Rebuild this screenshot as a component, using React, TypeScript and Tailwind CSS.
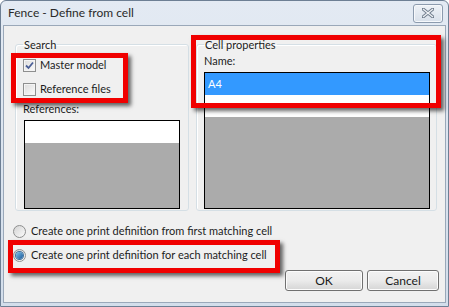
import React from "react";

const RedBox = ({ className }: { className: string }) => (
  <div
    className={`pointer-events-none absolute border-[5px] border-[#f00000] shadow-[3px_3px_4px_rgba(0,0,0,0.6)] ${className}`}
  />
);

const CheckBox = ({ checked }: { checked?: boolean }) => (
  <span className="flex h-[13px] w-[13px] items-center justify-center border border-[#8e8f8f] bg-gradient-to-br from-[#dcdcdc] to-[#fbfbfb] shadow-[inset_0_0_0_1px_#f4f4f4]">
    {checked && (
      <svg width="9" height="9" viewBox="0 0 9 9">
        <path d="M1 4.5 L3.5 7 L8 1.5" fill="none" stroke="#4a5f97" strokeWidth="1.8" />
      </svg>
    )}
  </span>
);

const Radio = ({ checked }: { checked?: boolean }) => (
  <span className="flex h-[13px] w-[13px] items-center justify-center rounded-full border border-[#8e8f8f] bg-gradient-to-br from-[#d4d4d4] to-[#fbfbfb]">
    {checked && (
      <span className="h-[7px] w-[7px] rounded-full bg-gradient-to-br from-[#7ec3ec] to-[#1a5a9a] shadow-[0_0_0_1px_#3d6e9c]" />
    )}
  </span>
);

const Button = ({ label, className }: { label: string; className: string }) => (
  <button
    className={`flex h-[21px] items-center justify-center rounded-[3px] border border-[#707070] bg-gradient-to-b from-[#f2f2f2] via-[#ebebeb] to-[#d5d5d5] text-[12px] text-[#1a1a1a] shadow-[inset_0_0_0_1px_#fcfcfc] ${className}`}
  >
    {label}
  </button>
);

export default function App() {
  return (
    <div className="relative flex h-[307px] w-[449px] flex-col overflow-hidden rounded-t-[6px] border border-[#6d7f94] bg-gradient-to-b from-[#e3eaf3] to-[#d3deeb] font-['Lato',sans-serif] text-[11px] text-[#1c1c1c]">
      {/* Title bar */}
      <div className="flex h-[24px] items-center justify-between pl-[7px] pr-[5px]">
        <span className="text-[12px] text-[#2a2a2a]">Fence - Define from cell</span>
        <div className="flex h-[19px] w-[30px] items-center justify-center rounded-[3px] border border-[#8c9bae] bg-gradient-to-b from-[#eef2f7] to-[#d8e0ea] shadow-[inset_0_0_0_1px_#f6f8fb]">
          <svg width="12" height="10" viewBox="0 0 12 10">
            <path
              d="M1 1 L11 9 M11 1 L1 9"
              stroke="#6f7c8c"
              strokeWidth="3.2"
              strokeLinecap="square"
            />
            <path d="M1 1 L11 9 M11 1 L1 9" stroke="#eef1f5" strokeWidth="1.4" />
          </svg>
        </div>
      </div>

      {/* Client area */}
      <div className="mx-[2px] mb-[3px] flex flex-1 flex-col border border-[#9aa8b9] bg-[#f0f0f0] pt-[11px]">
        <div className="flex gap-[7px] pl-[11px]">
          <fieldset className="flex h-[174px] w-[174px] flex-col rounded-[3px] border border-[#d5dfe5] pl-[7px] shadow-[inset_1px_1px_0_#ffffff]">
            <legend className="px-[1px] leading-[15px]">Search</legend>
            <label className="mt-[5px] flex h-[16px] items-center gap-[4px]">
              <CheckBox checked />
              <span>Master model</span>
            </label>
            <label className="mt-[8px] flex h-[16px] items-center gap-[4px]">
              <CheckBox />
              <span>Reference files</span>
            </label>
            <div className="mt-[4px] flex h-[16px] items-center">References:</div>
            <div className="ml-[1px] mt-[3px] flex h-[89px] w-[156px] flex-col border border-black bg-[#ababab]">
              <div className="h-[22px] bg-white" />
            </div>
          </fieldset>

          <fieldset className="flex h-[174px] w-[241px] flex-col rounded-[3px] border border-[#d5dfe5] pl-[7px] shadow-[inset_1px_1px_0_#ffffff]">
            <legend className="px-[1px] leading-[15px]">Cell properties</legend>
            <div className="mt-[1px] flex h-[16px] items-center">Name:</div>
            <div className="mt-[3px] flex h-[137px] w-[226px] flex-col border border-black bg-[#ababab]">
              <div className="flex flex-col bg-white">
                <div className="flex h-[22px] items-center bg-[#3399ff] pl-[3px] text-white">A4</div>
                <div className="h-[22px]" />
              </div>
            </div>
          </fieldset>
        </div>

        <label className="ml-[9px] mt-[12px] flex h-[16px] items-center gap-[5px]">
          <Radio />
          <span>Create one print definition from first matching cell</span>
        </label>
        <label className="ml-[9px] mt-[8px] flex h-[16px] items-center gap-[5px]">
          <Radio checked />
          <span>Create one print definition for each matching cell</span>
        </label>

        <div className="mt-[7px] flex justify-end gap-[4px] pr-[6px]">
          <Button label="OK" className="w-[78px]" />
          <Button label="Cancel" className="w-[72px]" />
        </div>
      </div>

      {/* Annotation boxes */}
      <RedBox className="left-[10px] top-[52px] h-[50px] w-[117px]" />
      <RedBox className="left-[190px] top-[34px] h-[73px] w-[250px]" />
      <RedBox className="left-[7px] top-[239px] h-[33px] w-[272px]" />
    </div>
  );
}
